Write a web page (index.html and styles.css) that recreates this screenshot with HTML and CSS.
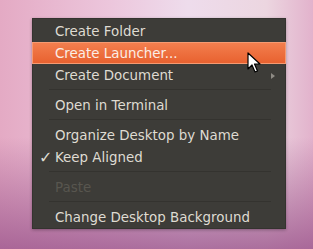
FILE: index.html
```html
<!DOCTYPE html>
<html lang="en">
<head>
    <meta charset="UTF-8">
    <title>Desktop menu</title>
    <link rel="stylesheet" href="styles.css">
</head>
<body>
    <div class="desktop">
        <div class="menu">
            <div class="item">Create Folder</div>
            <div class="item active">Create Launcher...</div>
            <div class="item">Create Document
                <span class="arrow"></span>
            </div>
            <div class="sep"></div>
            <div class="item">Open in Terminal</div>
            <div class="sep"></div>
            <div class="item">Organize Desktop by Name</div>
            <div class="item"><span class="check">&#10003;</span>Keep Aligned</div>
            <div class="sep"></div>
            <div class="item disabled">Paste</div>
            <div class="sep"></div>
            <div class="item">Change Desktop Background</div>
        </div>
        <svg class="cursor" width="14" height="22" viewBox="0 0 14 22">
            <path d="M1 1 L1 17 L5 13 L8 20 L10.5 19 L7.5 12 L13 12 Z" fill="#fff" stroke="#000" stroke-width="1.2" stroke-linejoin="round"/>
        </svg>
    </div>
</body>
</html>
```

FILE: styles.css
```css
body, html {
    height: 100%;
    margin: 0;
    font-family: "DejaVu Sans", sans-serif;
}

.desktop {
    position: relative;
    width: 313px;
    height: 249px;
    overflow: hidden;
    background:
        linear-gradient(180deg, rgba(255, 255, 255, 0) 0%, rgba(160, 90, 145, 0) 55%, rgba(155, 85, 140, 0.8) 100%),
        linear-gradient(90deg, #e4aac4 0%, #ecc6dc 35%, #eedcec 60%, #ecd6e0 85%, #e2b2cc 100%);
    padding: 18px 0 0 32px;
    box-sizing: border-box;
}

.menu {
    width: 254px;
    height: 211px;
    box-sizing: border-box;
    background: #3d3c38;
    border: 1px solid #34332f;
    padding: 1px 0;
    box-shadow: 0 1px 3px rgba(0, 0, 0, 0.3);
}

.item {
    position: relative;
    height: 22px;
    line-height: 24px;
    padding-left: 22px;
    font-size: 13.4px;
    color: #dfdbd2;
    white-space: nowrap;
}

.item.active {
    margin: 0 -1px;
    padding-left: 23px;
    background: linear-gradient(180deg, #f38050 0%, #e8602e 100%);
    box-shadow: inset 0 0 0 1px #f59a72;
    color: #fbeee6;
}

.item.disabled {
    color: #58564f;
}

.check {
    position: absolute;
    left: 6px;
    font-size: 16px;
}

.arrow {
    position: absolute;
    right: 10px;
    top: 9px;
    width: 0;
    height: 0;
    border-left: 4px solid #8e8b84;
    border-top: 3px solid transparent;
    border-bottom: 3px solid transparent;
}

.sep {
    height: 8px;
    position: relative;
}

.sep::after {
    content: "";
    position: absolute;
    left: 16px;
    right: 14px;
    top: 3px;
    height: 1px;
    background: #34332f;
}

.cursor {
    position: absolute;
    left: 247px;
    top: 52px;
}
```
